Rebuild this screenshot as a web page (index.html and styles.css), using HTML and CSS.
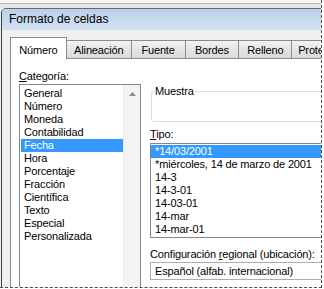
FILE: index.html
```html
<!DOCTYPE html>
<html lang="es">
<head>
<meta charset="utf-8">
<title>Formato de celdas</title>
<link rel="stylesheet" href="styles.css">
</head>
<body>
<div class="frame">
  <div class="desk"></div>
  <div class="window">
    <div class="titlebar">Formato de celdas</div>
    <div class="client">
      <div class="tabs">
        <div class="tab active t-num">Número</div>
        <div class="tab t-ali">Alineación</div>
        <div class="tab t-fue">Fuente</div>
        <div class="tab t-bor">Bordes</div>
        <div class="tab t-rel">Relleno</div>
        <div class="tab t-pro">Protección</div>
      </div>
      <div class="panel">
        <div class="col-left">
          <div class="label cat-label"><u>C</u>ategoría:</div>
          <div class="listbox cat">
            <ul class="items">
              <li>General</li>
              <li>Número</li>
              <li>Moneda</li>
              <li>Contabilidad</li>
              <li class="sel">Fecha</li>
              <li>Hora</li>
              <li>Porcentaje</li>
              <li>Fracción</li>
              <li>Científica</li>
              <li>Texto</li>
              <li>Especial</li>
              <li>Personalizada</li>
            </ul>
            <div class="vscroll">
              <div class="sbtn">
                <svg width="7" height="4" viewBox="0 0 7 4"><path d="M0 4 L3.5 0 L7 4 Z" fill="#8c8c8c"/></svg>
              </div>
            </div>
          </div>
        </div>
        <div class="col-right">
          <fieldset class="sample">
            <legend>Muestra</legend>
            <div class="sample-body"></div>
          </fieldset>
          <div class="label tipo-label"><u>T</u>ipo:</div>
          <ul class="listbox types">
            <li class="sel">*14/03/2001</li>
            <li>*miércoles, 14 de marzo de 2001</li>
            <li>14-3</li>
            <li>14-3-01</li>
            <li>14-03-01</li>
            <li>14-mar</li>
            <li>14-mar-01</li>
          </ul>
          <div class="label conf-label">Configuración <u>r</u>egional (ubicación):</div>
          <div class="combo">Español (alfab. internacional)</div>
        </div>
      </div>
    </div>
  </div>
</div>
</body>
</html>
```

FILE: styles.css
```css
* { box-sizing: border-box; }

html, body {
  margin: 0;
  padding: 0;
  background: #ffffff;
}

body {
  font-family: "Liberation Sans", Arial, sans-serif;
  font-size: 11px;
  letter-spacing: -0.15px;
  color: #000;
}

.frame {
  width: 322px;
  height: 288px;
  border-right: 1px dashed #505050;
  border-bottom: 1px dashed #505050;
  overflow: hidden;
  background: #f0f0f0;
  display: flex;
  flex-direction: column;
}

.desk {
  flex: none;
  height: 8px;
  background: linear-gradient(#f6f6f6 0 3px, #b8b8b8 3px 4px, #e6e6e6 4px);
}

.window {
  flex: 1;
  width: 360px;
  margin-left: 1px;
  border-left: 1px solid #3a3e44;
  border-top: 1px solid #5b6a7e;
  border-top-left-radius: 5px;
  background: #f0f0f0;
  display: flex;
  flex-direction: column;
  overflow: hidden;
}

.titlebar {
  flex: none;
  height: 21px;
  line-height: 21px;
  padding-left: 7px;
  font-size: 12px;
  letter-spacing: 0;
  background: linear-gradient(#b9d0ea, #c9dbef 60%, #d4e3f3);
  color: #000;
}

.client {
  flex: 1;
  padding: 7px 0 0 8px;
  background: #f0f0f0;
}

.tabs {
  display: flex;
  align-items: flex-end;
  height: 21px;
}

.tab {
  height: 18px;
  padding-top: 3px;
  line-height: 13px;
  text-align: center;
  border: 1px solid #898c95;
  border-bottom: none;
  margin-left: -1px;
  background: linear-gradient(#f3f3f3, #e3e3e3 55%, #dadada);
  white-space: nowrap;
}

.tab.active {
  height: 22px;
  padding-top: 6px;
  margin-left: 0;
  margin-bottom: -1px;
  background: #ffffff;
  position: relative;
  z-index: 1;
}

.t-num { width: 57px; }
.t-ali { width: 66px; }
.t-fue { width: 55px; }
.t-bor { width: 55px; }
.t-rel { width: 54px; }
.t-pro { width: 70px; text-align: left; padding-left: 6px; }

.panel {
  display: flex;
  height: 260px;
  background: #ffffff;
  border: 1px solid #898c95;
  padding: 11px 0 0 8px;
}

.label {
  line-height: 13px;
  white-space: nowrap;
}

.col-left {
  width: 122px;
  margin-right: 9px;
  flex: none;
}

.cat-label {
  margin-bottom: 1px;
}

.listbox {
  border: 1px solid #828790;
  background: #fff;
  margin: 0;
  list-style: none;
}

.cat {
  display: flex;
  height: 240px;
}

.items {
  list-style: none;
  margin: 0;
  padding: 2px 0 0 1px;
  flex: 1;
}

.items li,
.types li {
  line-height: 13px;
  height: 13px;
  white-space: nowrap;
}

.items li {
  padding-left: 3px;
}

.sel {
  background: #3399ff;
  color: #ffffff;
}

.vscroll {
  width: 17px;
  flex: none;
  background: #f3f3f3;
  border-left: 1px solid #ececec;
}

.sbtn {
  height: 17px;
  display: flex;
  align-items: center;
  justify-content: center;
}

.col-right {
  width: 200px;
  flex: none;
}

.sample {
  margin: 15px 0 0 1px;
  padding: 0;
  border: 1px solid #d5dfe5;
  border-radius: 3px;
}

.sample legend {
  padding: 0 1px;
  margin-left: 2px;
  line-height: 13px;
}

.sample-body {
  height: 23px;
}

.tipo-label {
  margin-top: 6px;
}

.types {
  margin-top: 2px;
  padding: 1px 0 1px 0;
}

.types li {
  padding-left: 4px;
}

.conf-label {
  margin-top: 10px;
}

.combo {
  margin-top: 1px;
  height: 18px;
  line-height: 16px;
  border: 1px solid #abadb3;
  padding-left: 4px;
  white-space: nowrap;
}
```
